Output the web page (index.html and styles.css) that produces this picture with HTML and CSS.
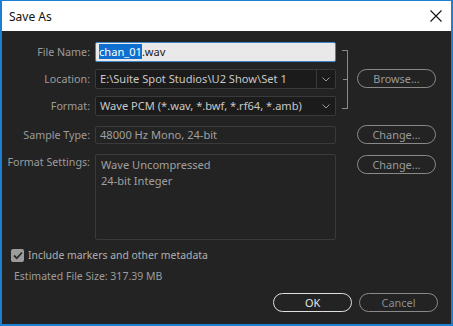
FILE: index.html
```html
<!DOCTYPE html>
<html lang="en">
<head>
    <meta charset="UTF-8">
    <title>Save As</title>
    <link rel="stylesheet" href="styles.css">
</head>
<body>
    <div class="window">
        <div class="titlebar">
            <span class="title">Save As</span>
            <svg class="close" width="12" height="12" viewBox="0 0 12 12">
                <path d="M0.5 0.5 L11.5 11.5 M11.5 0.5 L0.5 11.5" stroke="#111" stroke-width="1.1" fill="none"/>
            </svg>
        </div>
        <div class="content">
            <div class="form">
                <label class="lbl row1">File Name:</label>
                <div class="field name-input row1"><span class="sel">chan_01</span>.wav</div>

                <label class="lbl row2">Location:</label>
                <div class="field dropdown row2">
                    <span class="value">E:\Suite Spot Studios\U2 Show\Set 1</span>
                    <span class="arrow split">
                        <svg width="8" height="5" viewBox="0 0 8 5"><path d="M0.5 0.5 L4 4 L7.5 0.5" stroke="#9a9a9a" fill="none"/></svg>
                    </span>
                </div>

                <label class="lbl row3">Format:</label>
                <div class="field dropdown row3">
                    <span class="value">Wave PCM (*.wav, *.bwf, *.rf64, *.amb)</span>
                    <span class="arrow">
                        <svg width="8" height="5" viewBox="0 0 8 5"><path d="M0.5 0.5 L4 4 L7.5 0.5" stroke="#9a9a9a" fill="none"/></svg>
                    </span>
                </div>

                <div class="bracket">
                    <div class="tick frame"></div>
                    <div class="tick mid"></div>
                </div>
                <button class="btn browse">Browse...</button>

                <label class="lbl row4">Sample Type:</label>
                <div class="field readonly row4">48000 Hz Mono, 24-bit</div>
                <button class="btn change1">Change...</button>

                <label class="lbl row5 top-lbl">Format Settings:</label>
                <div class="field settings row5">
                    <div>Wave Uncompressed</div>
                    <div>24-bit Integer</div>
                </div>
                <button class="btn change2">Change...</button>
            </div>

            <div class="check-row">
                <span class="checkbox">
                    <svg width="10" height="9" viewBox="0 0 10 9"><path d="M1 4.5 L3.8 7.3 L9 1.5" stroke="#2a2a2a" stroke-width="1.8" fill="none"/></svg>
                </span>
                <span>Include markers and other metadata</span>
            </div>
            <div class="size">Estimated File Size: 317.39 MB</div>

            <div class="footer">
                <button class="btn ok">OK</button>
                <button class="btn cancel">Cancel</button>
            </div>
        </div>
    </div>
</body>
</html>
```

FILE: styles.css
```css
html, body {
    margin: 0;
    padding: 0;
}

body {
    font-family: "Noto Sans", "Open Sans", sans-serif;
    font-size: 10.7px;
    background: #232323;
}

.window {
    width: 453px;
    height: 326px;
    box-sizing: border-box;
    border: 2px solid #1c7fd1;
    border-top-width: 1px;
    display: flex;
    flex-direction: column;
    background: #232323;
}

.titlebar {
    height: 30px;
    background: #ffffff;
    display: flex;
    align-items: center;
    justify-content: space-between;
    padding: 0 9px 0 7px;
    flex-shrink: 0;
}

.title {
    font-size: 12px;
    color: #111;
}

.content {
    flex: 1;
    padding-top: 11px;
}

.form {
    display: grid;
    grid-template-columns: 93px 241px 21px 79px;
    grid-template-rows: 20px 20px 20px 21px 89px;
    row-gap: 7px;
    column-gap: 0;
}

.form .row4 { margin-top: 3px; }
.form .row5 { margin-top: 3px; }

.lbl {
    grid-column: 1;
    text-align: right;
    padding-right: 5px;
    color: #9c9c9c;
    line-height: 20px;
    white-space: nowrap;
}

.form .row4.lbl {
    line-height: 18px;
}

.top-lbl {
    line-height: 16px;
}

.row1 { grid-row: 1; }
.row2 { grid-row: 2; }
.row3 { grid-row: 3; }
.row4 { grid-row: 4; }
.row5 { grid-row: 5; }

.field {
    grid-column: 2;
    box-sizing: border-box;
    border: 1px solid #3a3a3a;
    border-radius: 2px;
    color: #c8c8c8;
    font-size: 11.1px;
    padding: 0 4px;
    line-height: 18px;
    white-space: nowrap;
    overflow: hidden;
}

.name-input {
    background: #e9e9e9;
    border: 1px solid #3f86c8;
    color: #222;
    padding-left: 3px;
}

.sel {
    background: #0f6fd0;
    color: #fff;
}

.dropdown {
    display: flex;
    background: #1b1b1b;
    padding-right: 0;
}

.dropdown .value {
    flex: 1;
}

.arrow {
    width: 18px;
    display: flex;
    align-items: center;
    justify-content: center;
}

.arrow.split {
    border-left: 1px solid #3a3a3a;
}

.readonly {
    color: #a0a0a0;
    line-height: 16px;
}

.settings {
    color: #a0a0a0;
    line-height: 16px;
    padding: 2px 5px;
}

.bracket {
    grid-column: 3;
    grid-row: 1 / 4;
    position: relative;
}

.tick {
    position: absolute;
}

.tick.frame {
    top: 8px;
    left: 6px;
    width: 5px;
    height: 57px;
    border-top: 1px solid #8a8a8a;
    border-bottom: 1px solid #8a8a8a;
    border-right: 1px solid #8a8a8a;
}

.tick.mid {
    top: 37px;
    left: 7px;
    width: 5px;
    height: 1px;
    background: #8a8a8a;
}

.btn {
    font-family: inherit;
    font-size: 10.9px;
    background: transparent;
    border: 1px solid #8a8a8a;
    border-radius: 10px;
    color: #9a9a9a;
    padding: 0;
    height: 19px;
    line-height: 16px;
    width: 79px;
}

.browse {
    grid-column: 4;
    grid-row: 2;
}

.change1 {
    grid-column: 4;
    grid-row: 4;
    margin-top: 2px;
}

.change2 {
    grid-column: 4;
    grid-row: 5;
    align-self: start;
    margin-top: 4px;
}

.check-row {
    display: flex;
    align-items: center;
    gap: 4px;
    margin: 7px 0 0 9px;
    line-height: 16px;
    font-size: 10.4px;
    color: #b0b0b0;
}

.checkbox {
    width: 13px;
    height: 13px;
    background: #9c9c9c;
    border-radius: 2px;
    display: flex;
    align-items: center;
    justify-content: center;
}

.size {
    margin: 6px 0 0 12px;
    line-height: 14px;
    font-size: 10.5px;
    color: #9c9c9c;
}

.footer {
    display: flex;
    justify-content: flex-end;
    gap: 7px;
    margin-top: 10px;
    padding-right: 13px;
}

.ok {
    border-color: #e0e0e0;
    color: #e8e8e8;
}

.cancel {
    color: #8c8c8c;
}
```
